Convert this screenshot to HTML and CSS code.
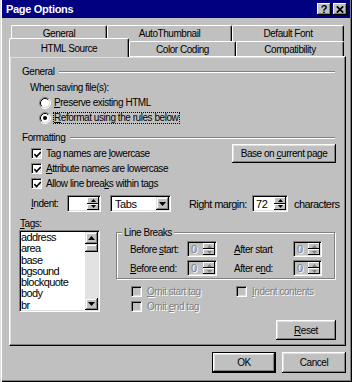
FILE: index.html
```html
<!DOCTYPE html>
<html>
<head>
<meta charset="utf-8">
<title>Page Options</title>
<link rel="stylesheet" href="styles.css">
</head>
<body>
<div class="window">
  <div class="titlebar">
    <span class="title">Page Options</span>
    <div class="tb-buttons">
      <span class="tb-btn tb-help">?</span>
      <span class="tb-btn"><svg width="8" height="7" viewBox="0 0 8 7"><path d="M0.8 0.3L7.2 6.7M7.2 0.3L0.8 6.7" stroke="#000" stroke-width="1.7" fill="none"/></svg></span>
    </div>
  </div>

  <div class="tabs">
    <div class="tabrow back">
      <div class="tab w96">General</div>
      <div class="tab w125">AutoThumbnail</div>
      <div class="tab w112">Default Font</div>
    </div>
    <div class="tabrow front">
      <div class="tab selected w120">HTML Source</div>
      <div class="tab w107">Color Coding</div>
      <div class="tab w108">Compatibility</div>
    </div>
  </div>

  <div class="panel">
    <div class="grp-head"><span>General</span><span class="etch"></span></div>
    <div class="row ind11">When saving file(s):</div>
    <div class="row ind20">
      <svg class="radio" width="12" height="12" viewBox="0 0 12 12"><circle cx="6" cy="6" r="4.5" fill="#fff"/><path d="M2.11 9.89A5.5 5.5 0 0 1 9.89 2.11" fill="none" stroke="#808080"/><path d="M9.89 2.11A5.5 5.5 0 0 1 2.11 9.89" fill="none" stroke="#fff"/><path d="M2.82 9.18A4.5 4.5 0 0 1 9.18 2.82" fill="none" stroke="#000"/><path d="M9.18 2.82A4.5 4.5 0 0 1 2.82 9.18" fill="none" stroke="#dfdfdf"/></svg>
      <span class="rlabel"><u>P</u>reserve existing HTML</span>
    </div>
    <div class="row ind20">
      <svg class="radio" width="12" height="12" viewBox="0 0 12 12"><circle cx="6" cy="6" r="4.5" fill="#fff"/><path d="M2.11 9.89A5.5 5.5 0 0 1 9.89 2.11" fill="none" stroke="#808080"/><path d="M9.89 2.11A5.5 5.5 0 0 1 2.11 9.89" fill="none" stroke="#fff"/><path d="M2.82 9.18A4.5 4.5 0 0 1 9.18 2.82" fill="none" stroke="#000"/><path d="M9.18 2.82A4.5 4.5 0 0 1 2.82 9.18" fill="none" stroke="#dfdfdf"/><circle cx="6" cy="6" r="2" fill="#000"/></svg>
      <span class="rlabel focus"><u>R</u>eformat using the rules below</span>
    </div>

    <div class="grp-head mt5"><span>Formatting</span><span class="etch"></span></div>
    <div class="row ind12 between">
      <span class="chk">
        <span class="cb"><svg width="7" height="7" viewBox="0 0 7 7"><path d="M0.3 3.2L2.6 5.5L6.8 1.1" fill="none" stroke="#000" stroke-width="1.7"/></svg></span>
        <span>Tag names are <u>l</u>owercase</span>
      </span>
      <div class="btn base"><span>Base on <u>c</u>urrent page</span></div>
    </div>
    <div class="row ind12">
      <span class="chk">
        <span class="cb"><svg width="7" height="7" viewBox="0 0 7 7"><path d="M0.3 3.2L2.6 5.5L6.8 1.1" fill="none" stroke="#000" stroke-width="1.7"/></svg></span>
        <span><u>A</u>ttribute names are lowercase</span>
      </span>
    </div>
    <div class="row ind12">
      <span class="chk">
        <span class="cb"><svg width="7" height="7" viewBox="0 0 7 7"><path d="M0.3 3.2L2.6 5.5L6.8 1.1" fill="none" stroke="#000" stroke-width="1.7"/></svg></span>
        <span>Allow line brea<u>k</u>s within tags</span>
      </span>
    </div>

    <div class="indent-row">
      <span class="lbl-indent"><u>I</u>ndent:</span>
      <div class="spin w34">
        <span class="spin-val"></span>
        <span class="spin-btns">
          <span class="sb"><svg width="5" height="3" viewBox="0 0 5 3"><path d="M0 3H5L2.5 0Z"/></svg></span>
          <span class="sb"><svg width="5" height="3" viewBox="0 0 5 3"><path d="M0 0H5L2.5 3Z"/></svg></span>
        </span>
      </div>
      <div class="combo">
        <span class="combo-val">Tabs</span>
        <span class="combo-btn"><svg width="7" height="4" viewBox="0 0 7 4"><path d="M0 0H7L3.5 4Z"/></svg></span>
      </div>
      <span class="lbl-rm">Ri<u>g</u>ht margin:</span>
      <div class="spin w36">
        <span class="spin-val">72</span>
        <span class="spin-btns">
          <span class="sb"><svg width="5" height="3" viewBox="0 0 5 3"><path d="M0 3H5L2.5 0Z"/></svg></span>
          <span class="sb"><svg width="5" height="3" viewBox="0 0 5 3"><path d="M0 0H5L2.5 3Z"/></svg></span>
        </span>
      </div>
      <span class="lbl-chars">characters</span>
    </div>

    <div class="tags-label"><span><u>T</u>ags:</span></div>

    <div class="lower">
      <div class="listbox">
        <div class="list-items">
          <div>address</div>
          <div>area</div>
          <div>base</div>
          <div>bgsound</div>
          <div>blockquote</div>
          <div>body</div>
          <div>br</div>
        </div>
        <div class="vscroll">
          <span class="sbtn"><svg width="7" height="4" viewBox="0 0 7 4"><path d="M0 4H7L3.5 0Z"/></svg></span>
          <span class="thumb"></span>
          <span class="track"></span>
          <span class="sbtn"><svg width="7" height="4" viewBox="0 0 7 4"><path d="M0 0H7L3.5 4Z"/></svg></span>
        </div>
      </div>

      <div class="right-col">
        <div class="group">
          <div class="group-label">Line Breaks</div>
          <div class="lb-row first">
            <span class="lb-lbl1">Before <u>s</u>tart:</span>
            <div class="spin dis-spin w30">
              <span class="spin-val dis">0</span>
              <span class="spin-btns">
                <span class="sb"><svg width="5" height="3" viewBox="0 0 5 3"><path d="M0 3H5L2.5 0Z" fill="#808080"/></svg></span>
                <span class="sb"><svg width="5" height="3" viewBox="0 0 5 3"><path d="M0 0H5L2.5 3Z" fill="#808080"/></svg></span>
              </span>
            </div>
            <span class="lb-lbl2"><u>A</u>fter start</span>
            <div class="spin dis-spin w29">
              <span class="spin-val dis">0</span>
              <span class="spin-btns">
                <span class="sb"><svg width="5" height="3" viewBox="0 0 5 3"><path d="M0 3H5L2.5 0Z" fill="#808080"/></svg></span>
                <span class="sb"><svg width="5" height="3" viewBox="0 0 5 3"><path d="M0 0H5L2.5 3Z" fill="#808080"/></svg></span>
              </span>
            </div>
          </div>
          <div class="lb-row">
            <span class="lb-lbl1"><u>B</u>efore end:</span>
            <div class="spin dis-spin w30">
              <span class="spin-val dis">0</span>
              <span class="spin-btns">
                <span class="sb"><svg width="5" height="3" viewBox="0 0 5 3"><path d="M0 3H5L2.5 0Z" fill="#808080"/></svg></span>
                <span class="sb"><svg width="5" height="3" viewBox="0 0 5 3"><path d="M0 0H5L2.5 3Z" fill="#808080"/></svg></span>
              </span>
            </div>
            <span class="lb-lbl2">After e<u>n</u>d:</span>
            <div class="spin dis-spin w29">
              <span class="spin-val dis">0</span>
              <span class="spin-btns">
                <span class="sb"><svg width="5" height="3" viewBox="0 0 5 3"><path d="M0 3H5L2.5 0Z" fill="#808080"/></svg></span>
                <span class="sb"><svg width="5" height="3" viewBox="0 0 5 3"><path d="M0 0H5L2.5 3Z" fill="#808080"/></svg></span>
              </span>
            </div>
          </div>
        </div>

        <div class="cb-row first">
          <span class="chk col105">
            <span class="cb off"></span>
            <span class="dis"><u>O</u>mit start tag</span>
          </span>
          <span class="chk">
            <span class="cb off"></span>
            <span class="dis"><u>I</u>ndent contents</span>
          </span>
        </div>
        <div class="cb-row">
          <span class="chk">
            <span class="cb off"></span>
            <span class="dis">Omit <u>e</u>nd tag</span>
          </span>
        </div>
        <div class="reset-wrap"><div class="btn reset"><span><u>R</u>eset</span></div></div>
      </div>
    </div>
  </div>

  <div class="dlg-buttons">
    <div class="btn dlg default">OK</div>
    <div class="btn dlg">Cancel</div>
  </div>
</div>
</body>
</html>
```

FILE: styles.css
```css
* { box-sizing: border-box; }
html, body { margin: 0; padding: 0; }
body {
  background: #c0c0c0;
  font-family: "Liberation Sans", Arial, sans-serif;
  font-size: 10px;
  letter-spacing: -0.45px;
  color: #000;
}
u { text-underline-offset: 1px; }

.window {
  width: 352px;
  height: 382px;
  padding: 0 2px 2px 2px;
  background: #c0c0c0;
  box-shadow: inset 1px 0 0 #dfdfdf, inset 2px 0 0 #fff, inset -1px -1px 0 #000, inset -2px -2px 0 #808080;
  overflow: hidden;
}

/* title bar */
.titlebar {
  height: 18px;
  background: #000080;
  display: flex;
  align-items: center;
  justify-content: space-between;
  padding: 0 3px 0 4px;
}
.title {
  color: #fff;
  font-weight: bold;
  font-size: 11px;
  letter-spacing: -0.3px;
}
.tb-buttons { display: flex; gap: 2px; }
.tb-btn {
  width: 14px;
  height: 12px;
  background: #c0c0c0;
  box-shadow: inset -1px -1px 0 #000, inset 1px 1px 0 #fff, inset -2px -2px 0 #808080;
  display: flex;
  align-items: center;
  justify-content: center;
}
.tb-help { font-weight: bold; font-size: 11px; letter-spacing: 0; padding-bottom: 1px; }

/* tabs */
.tabs { margin: 7px 0 0 7px; }
.tabrow { display: flex; }
.tabrow.back { height: 16px; padding-left: 2px; }
.tabrow.front { height: 15px; align-items: flex-end; }
.tab {
  height: 100%;
  display: flex;
  align-items: center;
  justify-content: center;
  background: #c0c0c0;
  border-top: 1px solid #fff;
  border-left: 1px solid #fff;
  border-right: 1px solid #000;
  box-shadow: inset -1px 0 0 #808080;
  border-radius: 2px 2px 0 0;
}
.tab.selected {
  height: 19px;
  margin-bottom: -1px;
  position: relative;
  z-index: 1;
}
.w96 { width: 96px; }
.w125 { width: 125px; }
.w112 { width: 112px; }
.w120 { width: 120px; }
.w107 { width: 107px; }
.w108 { width: 108px; }

/* panel */
.panel {
  width: 337px;
  height: 290px;
  margin-left: 7px;
  border-top: 1px solid #fff;
  border-left: 1px solid #fff;
  border-right: 1px solid #000;
  border-bottom: 1px solid #000;
  box-shadow: inset -1px -1px 0 #808080, inset 1px 1px 0 #dfdfdf;
  padding: 7px 9px 0 9px;
}
.grp-head {
  height: 15px;
  display: flex;
  align-items: center;
  padding-left: 3px;
}
.mt5 { margin-top: 5px; }
.etch {
  flex: 1;
  height: 2px;
  border-top: 1px solid #808080;
  border-bottom: 1px solid #fff;
  margin: 1px 1px 0 5px;
}
.row {
  height: 15px;
  display: flex;
  align-items: center;
}
.grp-head + .row { margin-top: 1px; }
.ind11 { padding-left: 11px; }
.ind12 { padding-left: 12px; }
.ind20 { padding-left: 20px; }
.between { justify-content: space-between; }
.radio { flex: none; }
.rlabel { margin-left: 3px; }
.rlabel.focus {
  margin-left: 2px;
  border: 1px dotted #000;
  padding: 0 1px 0 0;
  line-height: 10px;
  height: 12px;
}

.chk { display: flex; align-items: center; }
.cb {
  width: 11px;
  height: 11px;
  flex: none;
  background: #fff;
  border-top: 1px solid #808080;
  border-left: 1px solid #808080;
  border-right: 1px solid #fff;
  border-bottom: 1px solid #fff;
  box-shadow: inset 1px 1px 0 #000, inset -1px -1px 0 #dfdfdf;
  display: flex;
  align-items: center;
  justify-content: center;
  margin-right: 4px;
}
.cb svg { display: block; margin: 1px 0 0 1px; }
.cb.off { background: #c0c0c0; margin-right: 5px; }

/* buttons */
.btn {
  display: flex;
  align-items: center;
  justify-content: center;
  background: #c0c0c0;
  box-shadow: inset -1px -1px 0 #000, inset 1px 1px 0 #fff, inset -2px -2px 0 #808080, inset 2px 2px 0 #dfdfdf;
}
.base { width: 104px; height: 19px; flex: none; }
.reset { width: 60px; height: 20px; }
.dlg { width: 64px; height: 21px; }
.dlg.default {
  border: 1px solid #000;
}

/* indent row */
.indent-row {
  display: flex;
  align-items: center;
  height: 17px;
  margin-top: 4px;
  padding-left: 12px;
}
.lbl-indent { width: 36px; flex: none; }
.spin {
  display: flex;
  height: 17px;
  flex: none;
  background: #fff;
  border-top: 1px solid #808080;
  border-left: 1px solid #808080;
  border-right: 1px solid #fff;
  border-bottom: 1px solid #fff;
  box-shadow: inset 1px 1px 0 #000, inset -1px -1px 0 #dfdfdf;
  padding: 1px;
}
.spin-val {
  flex: 1;
  display: flex;
  align-items: center;
  padding-left: 2px;
  font-size: 11px;
}
.spin-btns {
  width: 12px;
  display: flex;
  flex-direction: column;
}
.sb {
  flex: 1;
  display: flex;
  align-items: center;
  justify-content: center;
  background: #c0c0c0;
  box-shadow: inset -1px -1px 0 #000, inset 1px 1px 0 #fff;
}
.sb svg { display: block; }
.w34 { width: 34px; }
.w36 { width: 36px; }
.w30 { width: 30px; }
.w29 { width: 29px; }
.dis-spin { background: #c0c0c0; height: 16px; }
.dis { color: #808080; text-shadow: 1px 1px 0 #fff; }

.combo {
  display: flex;
  width: 61px;
  height: 17px;
  flex: none;
  margin-left: 9px;
  background: #fff;
  border-top: 1px solid #808080;
  border-left: 1px solid #808080;
  border-right: 1px solid #fff;
  border-bottom: 1px solid #fff;
  box-shadow: inset 1px 1px 0 #000, inset -1px -1px 0 #dfdfdf;
  padding: 1px;
}
.combo-val {
  flex: 1;
  display: flex;
  align-items: center;
  padding-left: 3px;
  font-size: 11px;
}
.combo-btn {
  width: 13px;
  display: flex;
  align-items: center;
  justify-content: center;
  background: #c0c0c0;
  box-shadow: inset -1px -1px 0 #000, inset 1px 1px 0 #dfdfdf, inset -2px -2px 0 #808080, inset 2px 2px 0 #fff;
}
.combo-btn svg { display: block; }
.lbl-rm { width: 63px; margin-left: 18px; flex: none; font-size: 11px; letter-spacing: -0.6px; }
.lbl-chars { margin-left: 6px; white-space: nowrap; font-size: 11px; letter-spacing: -0.6px; }

.tags-label {
  height: 14px;
  margin-top: 4px;
  padding-left: 1px;
  display: flex;
  align-items: center;
}

/* lower area */
.lower { display: flex; align-items: flex-start; }
.listbox {
  width: 81px;
  height: 82px;
  flex: none;
  display: flex;
  background: #fff;
  border-top: 1px solid #808080;
  border-left: 1px solid #808080;
  border-right: 1px solid #fff;
  border-bottom: 1px solid #fff;
  box-shadow: inset 1px 1px 0 #000, inset -1px -1px 0 #dfdfdf;
  padding: 1px;
}
.list-items {
  flex: 1;
  font-size: 11px;
  letter-spacing: -0.6px;
  line-height: 11.3px;
  overflow: hidden;
}
.vscroll {
  width: 13px;
  display: flex;
  flex-direction: column;
  background: #e2e2e2;
}
.sbtn {
  height: 12px;
  display: flex;
  align-items: center;
  justify-content: center;
  background: #c0c0c0;
  box-shadow: inset -1px -1px 0 #000, inset 1px 1px 0 #dfdfdf, inset -2px -2px 0 #808080, inset 2px 2px 0 #fff;
}
.sbtn svg { display: block; }
.thumb {
  height: 8px;
  background: #c0c0c0;
  box-shadow: inset -1px -1px 0 #000, inset 1px 1px 0 #dfdfdf, inset -2px -2px 0 #808080, inset 2px 2px 0 #fff;
}
.track { flex: 1; }

.right-col { width: 220px; margin-left: 16px; }
.group {
  width: 219px;
  height: 47px;
  margin-top: 2px;
  border: 1px solid #808080;
  box-shadow: 1px 1px 0 #fff, inset 1px 1px 0 #fff;
}
.group-label {
  width: max-content;
  margin: -7px 0 0 5px;
  padding: 0 2px;
  background: #c0c0c0;
  height: 13px;
  line-height: 13px;
}
.lb-row {
  display: flex;
  align-items: center;
  height: 16px;
  padding-left: 13px;
}
.lb-row.first { margin-top: 2px; }
.lb-row + .lb-row { margin-top: 3px; }
.lb-lbl1 { width: 57px; flex: none; }
.lb-lbl2 { width: 59px; margin-left: 17px; flex: none; }

.cb-row {
  height: 15px;
  display: flex;
  align-items: center;
  padding-left: 15px;
}
.cb-row.first { margin-top: 5px; }
.col105 { width: 105px; }
.reset-wrap { display: flex; justify-content: flex-end; margin-top: 6px; }

/* dialog buttons */
.dlg-buttons {
  display: flex;
  justify-content: flex-end;
  gap: 6px;
  margin-top: 6px;
  padding-right: 4px;
}
```
